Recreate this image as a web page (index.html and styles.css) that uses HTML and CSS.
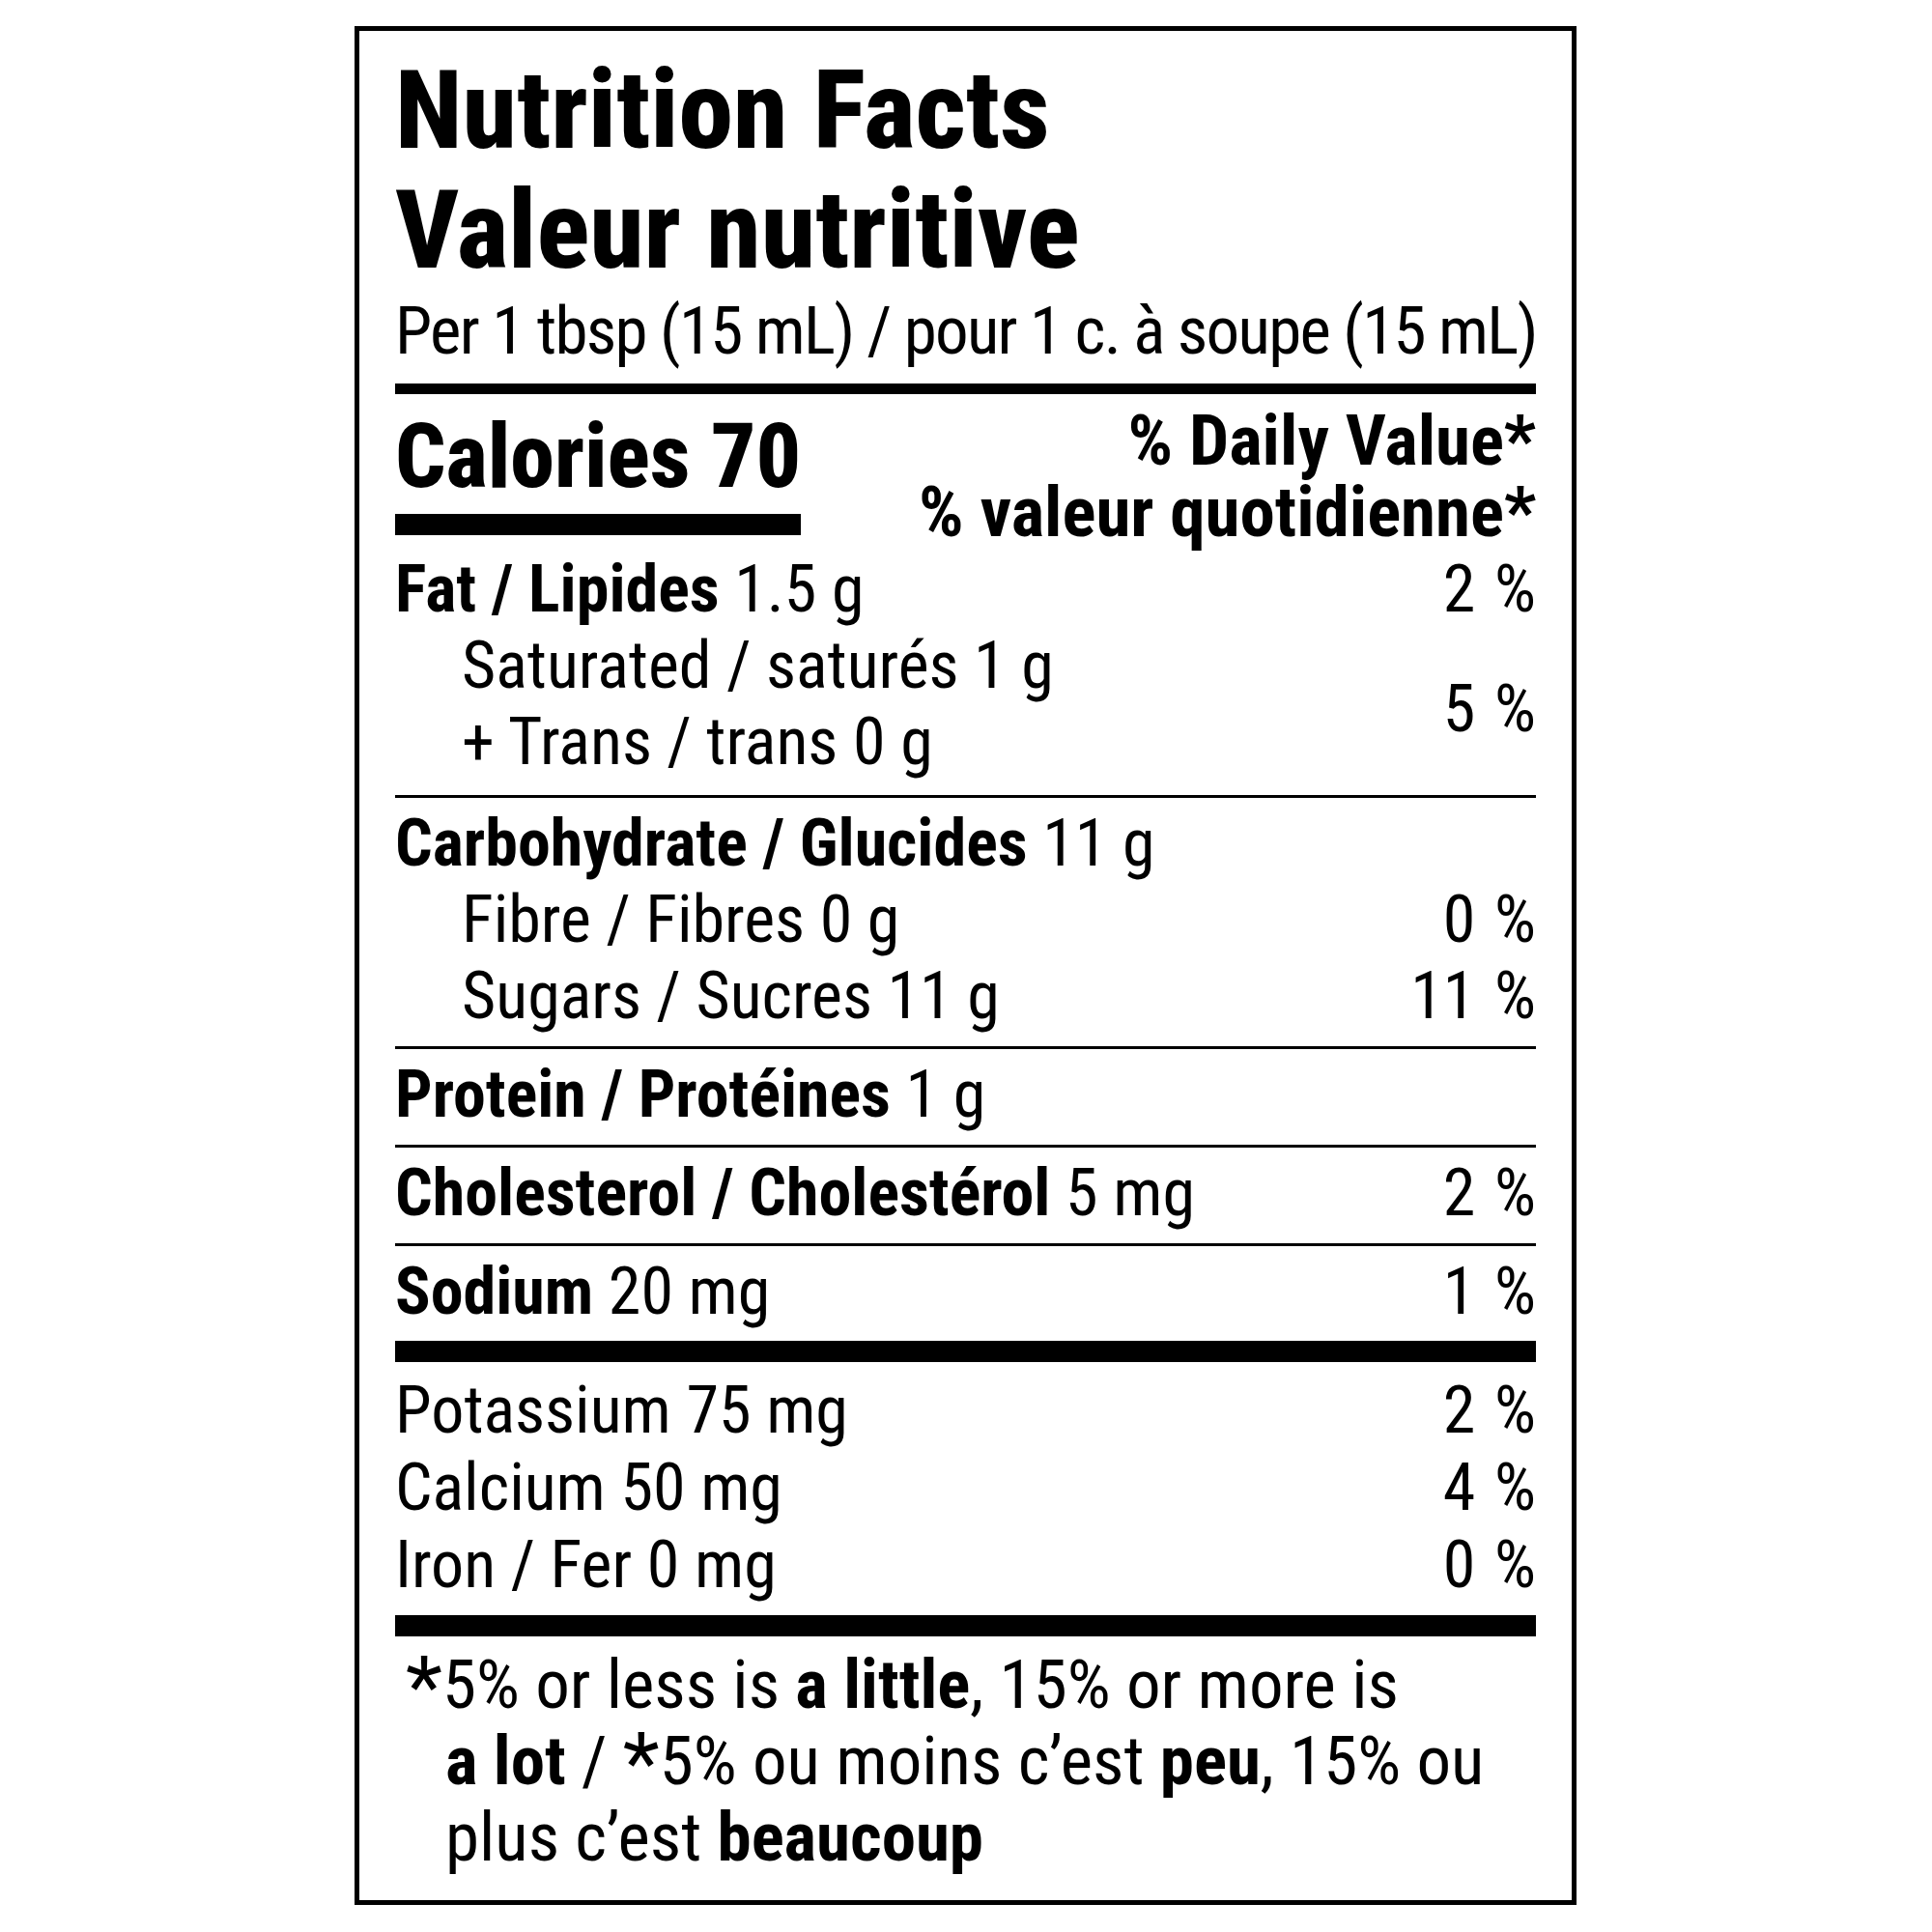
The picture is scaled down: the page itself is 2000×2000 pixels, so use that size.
FILE: index.html
```html
<!DOCTYPE html>
<html lang="en">
<head>
<meta charset="utf-8">
<title>Nutrition Facts</title>
<link rel="stylesheet" href="styles.css">
</head>
<body>
<section class="label">
  <h1 class="title">Nutrition Facts<br>Valeur nutritive</h1>
  <p class="serving">Per 1 tbsp (15 mL) / pour 1 c. à soupe (15 mL)</p>
  <div class="rule rule-top"></div>

  <div class="cal-row">
    <div class="cal">
      <div class="cal-text">Calories 70</div>
      <div class="cal-bar"></div>
    </div>
    <div class="dv-head">% Daily Value*<br>% valeur quotidienne*</div>
  </div>

  <div class="group group-fat">
    <div class="row"><span class="name"><b>Fat / Lipides</b> 1.5 g</span><span class="dv">2 %</span></div>
    <div class="row-split">
      <div class="sub">
        <div class="row indent">Saturated / saturés 1 g</div>
        <div class="row indent">+ Trans / trans 0 g</div>
      </div>
      <span class="dv">5 %</span>
    </div>
  </div>
  <div class="rule rule-thin rule-first"></div>

  <div class="group">
    <div class="row"><span class="name"><b>Carbohydrate / Glucides</b> 11 g</span></div>
    <div class="row indent"><span class="name">Fibre / Fibres 0 g</span><span class="dv">0 %</span></div>
    <div class="row indent"><span class="name">Sugars / Sucres 11 g</span><span class="dv">11 %</span></div>
  </div>
  <div class="rule rule-thin"></div>

  <div class="group">
    <div class="row"><span class="name"><b>Protein / Protéines</b> 1 g</span></div>
  </div>
  <div class="rule rule-thin"></div>

  <div class="group">
    <div class="row"><span class="name"><b>Cholesterol / Cholestérol</b> 5 mg</span><span class="dv">2 %</span></div>
  </div>
  <div class="rule rule-thin"></div>

  <div class="group">
    <div class="row"><span class="name"><b>Sodium</b> 20 mg</span><span class="dv">1 %</span></div>
  </div>
  <div class="rule rule-thick rule-sodium"></div>

  <div class="group group-min">
    <div class="row row-min"><span class="name">Potassium 75 mg</span><span class="dv">2 %</span></div>
    <div class="row row-min"><span class="name">Calcium 50 mg</span><span class="dv">4 %</span></div>
    <div class="row row-min"><span class="name">Iron / Fer 0 mg</span><span class="dv">0 %</span></div>
  </div>
  <div class="rule rule-thick"></div>

  <p class="foot"><span class="star">*</span>5% or less is <b>a little</b>, 15% or more is<br><b>a lot</b> / <span class="star">*</span>5% ou moins c’est <b>peu</b>, 15% ou<br>plus c’est <b>beaucoup</b></p>
</section>
</body>
</html>
```

FILE: styles.css
```css
* {
  box-sizing: border-box;
  margin: 0;
  padding: 0;
}

body {
  margin: 0;
  background: #fff;
  color: #000;
  font-family: "Roboto Condensed", "Roboto", sans-serif;
  font-stretch: 75%;
}

b {
  font-weight: 700;
}

.label {
  margin: 27px 0 0 367px;
  width: 1265px;
  height: 1945px;
  border: 5px solid #000;
  padding: 20px 37px 0 37px;
}

.title {
  font-size: 114px;
  line-height: 124px;
  font-weight: 800;
}

.serving {
  margin-top: 3px;
  font-size: 69px;
  line-height: 80px;
  letter-spacing: -1.7px;
  white-space: nowrap;
}

.rule {
  background: #000;
  width: 100%;
}

.rule-top {
  margin-top: 14px;
  height: 11px;
}

.rule-thin {
  margin-top: 12px;
  height: 3px;
}

.rule-first {
  margin-top: 15px;
}

.rule-thick {
  margin-top: 12px;
  height: 22px;
}

.rule-sodium {
  margin-top: 11px;
}

.cal-row {
  display: flex;
  justify-content: space-between;
  align-items: flex-start;
}

.cal {
  padding-top: 19px;
  width: 420px;
}

.cal-text {
  font-size: 92px;
  line-height: 92px;
  font-weight: 800;
  white-space: nowrap;
}

.cal-bar {
  margin-top: 13px;
  height: 22px;
  background: #000;
}

.dv-head {
  padding-top: 11px;
  font-size: 73px;
  line-height: 74px;
  font-weight: 700;
  text-align: right;
  white-space: nowrap;
}

.group {
  margin-top: 8px;
  font-size: 68px;
  line-height: 79px;
}

.group-fat {
  margin-top: 4px;
}

.group-min {
  margin-top: 10px;
}

.row {
  display: flex;
  justify-content: space-between;
  white-space: nowrap;
}

.row-min {
  line-height: 80px;
}

.indent {
  padding-left: 69px;
}

.row-split {
  display: flex;
  justify-content: space-between;
  align-items: center;
}

.row-split .dv {
  padding-top: 10px;
}

.dv {
  text-align: right;
  word-spacing: 4px;
}

.foot {
  margin-top: 10px;
  font-size: 71px;
  line-height: 79px;
  padding-left: 52px;
  text-indent: -41px;
  white-space: nowrap;
}

.star {
  display: inline-block;
  text-indent: 0;
  font-size: 88px;
  line-height: 0;
  vertical-align: -8px;
}
```
